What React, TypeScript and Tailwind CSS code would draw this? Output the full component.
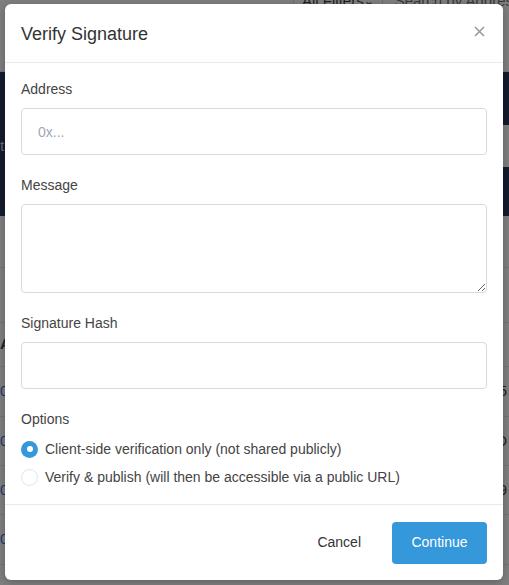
import * as React from "react";
import { useState } from "react";

const rows = [
  { h: "h-[52px]", left: "", right: "" },
  { h: "h-[55px]", left: "", right: "" },
  { h: "h-[44px]", left: "A", right: "" },
  { h: "h-[50px]", left: "0)", right: "5" },
  { h: "h-[49px]", left: "0)", right: "D" },
  { h: "h-[49px]", left: "0)", right: "9" },
  { h: "h-[50px]", left: "0)", right: "" },
];

const Backdrop: React.FC = () => (
  <div className="min-h-[585px] bg-[#7f7f7f] font-['Liberation_Sans',Arial,sans-serif] overflow-hidden">
    <div className="h-[72px] flex items-start border-b border-[#767676]">
      <div className="ml-[293px] h-[40px] w-[112px] border-l border-r border-[#6f6f6f] flex justify-between px-[8px] -mt-[8px] text-[15px] leading-[18px] text-[#1f1f1f] whitespace-nowrap">
        <span>All Filters</span>
        <span className="text-[12px]">⌄</span>
      </div>
      <div className="ml-[12px] -mt-[8px] text-[15px] leading-[18px] text-[#3a3a3a] whitespace-nowrap">
        Search by Address
      </div>
    </div>
    <div className="h-[144px] bg-[#141b2e] flex flex-col">
      <div className="h-[53px]" />
      <div className="h-[42px] flex items-center justify-between">
        <span className="text-[15px] text-[#6b6b6b]">t</span>
        <div className="h-full w-[19px] bg-[#7f7f7f] flex items-center text-[15px] text-[#7a4a1a]">
          M
        </div>
      </div>
    </div>
    {rows.map((r, i) => (
      <div
        key={i}
        className={`${r.h} border-b border-[#737373] flex items-center justify-between text-[15px]`}
      >
        <span className={r.left === "A" ? "text-[#222] font-bold" : "text-[#1f3a66]"}>
          {r.left}
        </span>
        <span className="text-[#222] pr-[2px]">{r.right}</span>
      </div>
    ))}
  </div>
);

const Radio: React.FC<{ checked: boolean }> = ({ checked }) =>
  checked ? (
    <span className="w-[17px] h-[17px] rounded-full bg-[#3498db] flex items-center justify-center shrink-0">
      <span className="w-[6px] h-[6px] rounded-full bg-white" />
    </span>
  ) : (
    <span className="w-[17px] h-[17px] rounded-full border border-[#dfe3eb] bg-white shrink-0" />
  );

export default function App() {
  const [option, setOption] = useState("client");

  return (
    <div className="relative">
      <Backdrop />
      <div className="absolute left-[5px] top-[4px] w-[498px] h-[576px] bg-white rounded-[6px] shadow-[0_2px_8px_rgba(0,0,0,0.25)] flex flex-col font-['Liberation_Sans',Arial,sans-serif]">
        {/* header */}
        <div className="h-[59px] border-b border-[#e8e8f2] flex items-center justify-between pl-[16px] pr-[18px]">
          <h2 className="text-[18px] text-[#333] leading-[22px] mt-[1px]">Verify Signature</h2>
          <button className="w-[12px] h-[12px] flex items-center justify-center -mt-[3px]">
            <svg width="11" height="11" viewBox="0 0 11 11">
              <path d="M1 1L10 10M10 1L1 10" stroke="#9a9a9a" strokeWidth="1.6" />
            </svg>
          </button>
        </div>

        {/* body */}
        <div className="px-[16px] pt-[16px] flex flex-col text-[14px] text-[#444]">
          <label className="leading-[20px]">Address</label>
          <input
            placeholder="0x..."
            className="mt-[9px] h-[47px] w-full rounded-[4px] border border-[#d5dae3] px-[16px] text-[14px] text-[#333] placeholder:text-[#9ea7b4] outline-none"
          />

          <label className="leading-[20px] mt-[20px]">Message</label>
          <textarea className="mt-[9px] h-[89px] w-full rounded-[4px] border border-[#d5dae3] px-[16px] py-[10px] text-[14px] outline-none" />

          <label className="leading-[20px] mt-[20px]">Signature Hash</label>
          <input className="mt-[9px] h-[47px] w-full rounded-[4px] border border-[#d5dae3] px-[16px] text-[14px] outline-none" />

          <label className="leading-[20px] mt-[20px]">Options</label>
          <div className="mt-[10px] flex flex-col gap-[8px]">
            <div
              className="flex items-center gap-[7px] h-[20px] cursor-pointer"
              onClick={() => setOption("client")}
            >
              <Radio checked={option === "client"} />
              <span>Client-side verification only (not shared publicly)</span>
            </div>
            <div
              className="flex items-center gap-[7px] h-[20px] cursor-pointer"
              onClick={() => setOption("publish")}
            >
              <Radio checked={option === "publish"} />
              <span>Verify &amp; publish (will then be accessible via a public URL)</span>
            </div>
          </div>
        </div>

        {/* footer */}
        <div className="mt-auto h-[76px] border-t border-[#e8e8f2] flex items-center justify-end pr-[16px]">
          <button className="h-[42px] pl-[16px] pr-[31px] text-[14px] text-[#333]">Cancel</button>
          <button className="h-[42px] w-[95px] rounded-[4px] bg-[#3498db] text-white text-[14px]">
            Continue
          </button>
        </div>
      </div>
    </div>
  );
}
